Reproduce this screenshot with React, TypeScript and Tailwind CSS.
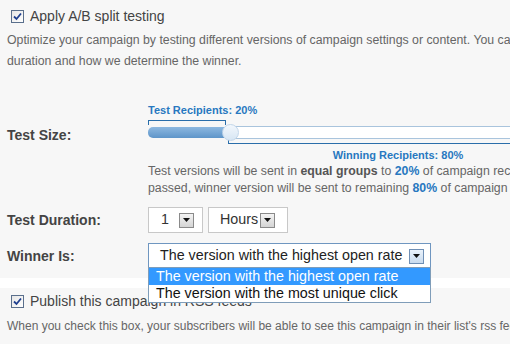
import React from "react";

function Check() {
  return (
    <span className="inline-flex items-center justify-center w-[13px] h-[13px] border border-[#5a6f8c] bg-gradient-to-br from-[#e6e6e6] to-white shrink-0">
      <svg width="9" height="9" viewBox="0 0 9 9">
        <path d="M1 4.5 L3.5 7 L8 1.5" stroke="#1f3f8f" strokeWidth="1.8" fill="none" />
      </svg>
    </span>
  );
}

function Arrow({ blue = false }: { blue?: boolean }) {
  return (
    <span
      className={
        "inline-flex items-center justify-center w-[15px] h-[15px] border shrink-0 " +
        (blue
          ? "border-[#6f8fb5] bg-gradient-to-b from-[#eaf2fb] to-[#c9dbee]"
          : "border-[#8a8a8a] bg-gradient-to-b from-[#f4f4f4] to-[#d4d4d4]")
      }
    >
      <svg width="7" height="4" viewBox="0 0 7 4">
        <path d="M0 0 L7 0 L3.5 4 Z" fill="#111" />
      </svg>
    </span>
  );
}

export default function App() {
  return (
    <div
      className="relative w-[510px] h-[344px] overflow-hidden bg-[#f7f7f7] text-[#444]"
      style={{ fontFamily: '"Liberation Sans", Arial, sans-serif' }}
    >
      <div className="pt-[9px] pl-[11px] flex items-center gap-[6px] h-[24px]">
        <Check />
        <span className="text-[14px] text-[#444] whitespace-nowrap">Apply A/B split testing</span>
      </div>
      <div className="pl-[7px] text-[12.3px] leading-[21px] text-[#666] whitespace-nowrap mt-[6px]">
        <div>Optimize your campaign by testing different versions of campaign settings or content. You can choose test size,</div>
        <div>duration and how we determine the winner.</div>
      </div>

      {/* Test size */}
      <div className="flex mt-[32px]">
        <div className="w-[148px] shrink-0 pl-[7px] pt-[21px] text-[14px] font-bold text-[#444]">Test Size:</div>
        <div className="flex flex-col shrink-0">
          <div className="w-[420px] relative h-[60px]">
            <div className="text-[11px] font-bold text-[#2878c0] leading-[13px] h-[14px]">Test Recipients: 20%</div>
            <div className="w-[78px] h-[5px] border-t border-l border-r border-[#2a6eaa] mt-[2px]" />
            <div className="flex items-center h-[14px]">
              <div className="w-[76px] h-[11px] rounded-l-[5px] bg-gradient-to-b from-[#8db8e0] to-[#5e95c9]" />
              <div className="w-[17px] h-[17px] rounded-full bg-gradient-to-b from-[#f2f7fc] to-[#d7e6f4] border border-[#c2d6ea] -ml-[2px] -mr-[8px] z-10" />
              <div className="flex-1 h-[13px] bg-white border-t border-b border-[#a9c4dd]" />
            </div>
            <div className="ml-[80px] w-[340px] h-[6px] border-l border-b border-r border-[#2a6eaa] mt-[-1px]" />
            <div className="ml-[80px] w-[340px] text-center text-[11px] font-bold text-[#2878c0] leading-[13px] mt-[5px]">
              Winning Recipients: 80%
            </div>
          </div>
          <div className="text-[12.3px] leading-[17px] text-[#666] whitespace-nowrap mt-[-1px]">
            <div>
              Test versions will be sent in <b className="text-[#555]">equal groups</b> to{" "}
              <b className="text-[#2878c0]">20%</b> of campaign recipients. After test duration
            </div>
            <div>
              passed, winner version will be sent to remaining <b className="text-[#2878c0]">80%</b> of campaign recipients.
            </div>
          </div>
        </div>
      </div>

      {/* Test duration */}
      <div className="flex items-center mt-[10px] h-[26px]">
        <div className="w-[148px] shrink-0 pl-[7px] text-[14px] font-bold text-[#444]">Test Duration:</div>
        <div className="flex gap-[5px]">
          <div className="w-[55px] h-[26px] bg-white border border-[#c8c8c8] flex items-center justify-between pl-[12px] pr-[8px] text-[14.3px] text-[#333]">
            <span>1</span>
            <Arrow />
          </div>
          <div className="w-[80px] h-[26px] bg-white border border-[#c8c8c8] flex items-center justify-between pl-[11px] pr-[12px] text-[14.3px] text-[#333]">
            <span>Hours</span>
            <Arrow />
          </div>
        </div>
      </div>

      {/* Winner */}
      <div className="flex items-center mt-[10px] h-[26px] relative">
        <div className="w-[148px] shrink-0 pl-[7px] text-[14px] font-bold text-[#444]">Winner Is:</div>
        <div className="w-[283px] h-[26px] bg-white border border-[#6f96c0] flex items-center justify-between pl-[11px] pr-[6px] text-[14.3px] text-[#222]">
          <span className="whitespace-nowrap">The version with the highest open rate</span>
          <Arrow blue />
        </div>
      </div>

      <div className="mt-[9px] h-[10px] bg-white" />

      {/* RSS */}
      <div className="pt-[6px] pl-[11px] flex items-center gap-[6px] h-[20px]">
        <Check />
        <span className="text-[14px] text-[#444] whitespace-nowrap">Publish this campaign in RSS feeds</span>
      </div>
      <div className="pl-[7px] mt-[9px] text-[12px] leading-[18px] text-[#666] whitespace-nowrap">
        When you check this box, your subscribers will be able to see this campaign in their list's rss feed.
      </div>

      {/* dropdown list overlay */}
      <div className="absolute left-[148px] top-[267px] w-[283px] bg-white border border-[#7f9db9] text-[14.3px] leading-[17px] whitespace-nowrap">
        <div className="bg-[#3399ff] text-white pl-[7px]">The version with the highest open rate</div>
        <div className="text-[#111] pl-[7px]">The version with the most unique click</div>
      </div>
    </div>
  );
}
